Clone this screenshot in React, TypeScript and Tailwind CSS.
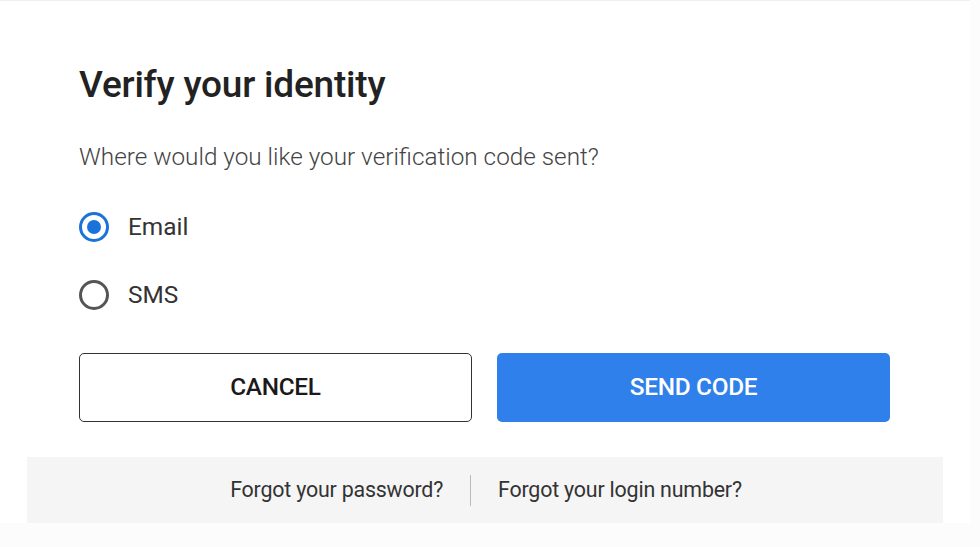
import { useState } from "react";

export default function App() {
  const [method, setMethod] = useState<"email" | "sms">("email");

  const options: { id: "email" | "sms"; label: string }[] = [
    { id: "email", label: "Email" },
    { id: "sms", label: "SMS" },
  ];

  return (
    <div
      className="w-[980px] h-[547px] bg-[#fcfcfc] overflow-hidden"
      style={{ fontFamily: "Roboto, 'Liberation Sans', sans-serif" }}
    >
      <div className="w-[970px] h-[523px] bg-white border-t border-[#f0f0f0] flex flex-col">
        <div className="pl-[79px] pr-[60px] pt-[62px]">
          <h1 className="text-[37px] leading-[44px] font-medium text-[#222] tracking-[-0.2px]">
            Verify your identity
          </h1>
          <p className="mt-[35px] text-[24.3px] leading-[30px] font-light text-[#444]">
            Where would you like your verification code sent?
          </p>

          <div className="mt-[40px] flex flex-col gap-[38px]">
            {options.map((o) => {
              const on = method === o.id;
              return (
                <label
                  key={o.id}
                  className="flex items-center gap-[19px] cursor-pointer"
                  onClick={() => setMethod(o.id)}
                >
                  <span
                    className={`w-[30px] h-[30px] rounded-full border-[3px] flex items-center justify-center ${
                      on ? "border-[#1a73d9]" : "border-[#555]"
                    }`}
                  >
                    {on && <span className="w-[14px] h-[14px] rounded-full bg-[#1a73d9]" />}
                  </span>
                  <span className="text-[24.4px] leading-[30px] text-[#333]">{o.label}</span>
                </label>
              );
            })}
          </div>

          <div className="mt-[43px] flex gap-[25px]">
            <button
              type="button"
              className="w-[393px] h-[69px] rounded-[5px] border-[1.5px] border-[#333] bg-white text-[24.4px] font-medium text-[#1a1a1a] tracking-[-0.3px]"
            >
              CANCEL
            </button>
            <button
              type="button"
              className="w-[393px] h-[69px] rounded-[5px] bg-[#2f80ea] text-[24.4px] font-medium text-white tracking-[-0.3px]"
            >
              SEND CODE
            </button>
          </div>
        </div>

        <div className="mt-auto mx-[27px] h-[66px] bg-[#f5f5f5] flex items-center justify-center">
          <a className="text-[21.4px] text-[#333] tracking-[-0.2px] pl-[2px]">Forgot your password?</a>
          <span className="mx-[27px] w-px h-[31px] bg-[#bbb]" />
          <a className="text-[21.4px] text-[#333] tracking-[-0.2px]">Forgot your login number?</a>
        </div>
      </div>
    </div>
  );
}
